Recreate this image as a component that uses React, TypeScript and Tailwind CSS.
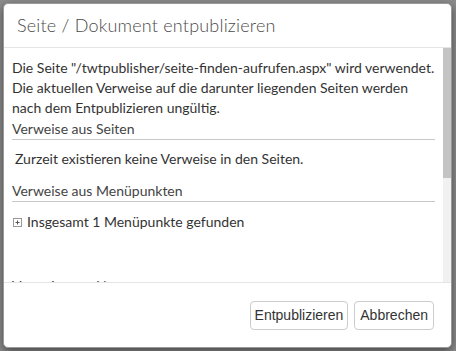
import React from 'react';

const bodyFont = { fontFamily: 'Lato, "Open Sans", sans-serif' };

export default function App() {
  return (
    <div className="h-[351px] w-[456px] overflow-hidden bg-[#8c8c8c] p-[3px] pr-[4px]" style={bodyFont}>
      <div className="flex h-[345px] flex-col overflow-hidden rounded-[5px] border border-[#9a9a9a] bg-white shadow-[0_3px_9px_rgba(0,0,0,0.5)]">
        <header className="flex h-[44px] shrink-0 items-center border-b border-[#e5e5e5] px-[13px]">
          <h4 className="text-[18px] font-light tracking-[0.2px] text-[#4a4a4a]">Seite / Dokument entpublizieren</h4>
        </header>

        <div className="flex h-[235px] shrink-0 border-b border-[#e5e5e5]">
          <div className="min-w-0 flex-1 overflow-hidden pl-[8px] pr-[8px] pt-[10px] text-[14px] leading-5 text-[#333]">
            <p>
              Die Seite "/twtpublisher/seite-finden-aufrufen.aspx" wird verwendet. Die aktuellen Verweise auf die
              darunter liegenden Seiten werden nach dem Entpublizieren ungültig.
            </p>
            <SectionHeading className="mt-px">Verweise aus Seiten</SectionHeading>
            <div className="mt-[9px] pl-[3px]">Zurzeit existieren keine Verweise in den Seiten.</div>
            <SectionHeading className="mt-[12px]">Verweise aus Menüpunkten</SectionHeading>
            <div className="mt-[10px] flex items-center gap-[5px]">
              <ExpandIcon />
              <span>Insgesamt 1 Menüpunkte gefunden</span>
            </div>
            <SectionHeading className="mt-[44px]">Verweise aus News</SectionHeading>
            <div className="mt-[9px] pl-[3px]">Zurzeit existieren keine Verweise in den News.</div>
          </div>
          <div className="flex w-[8px] shrink-0 flex-col bg-[#f1f1f1]">
            <div className="h-[130px] bg-[#c4c4c4]" />
          </div>
        </div>

        <footer
          className="flex flex-1 items-center justify-end gap-[6px] pr-[17px]"
          style={{ fontFamily: '"Liberation Sans", Arial, sans-serif' }}
        >
          <button className="h-[29px] whitespace-nowrap rounded-[4px] border border-[#ccc] bg-white px-[4px] text-[14px] text-[#333]">
            Entpublizieren
          </button>
          <button className="h-[29px] whitespace-nowrap rounded-[4px] border border-[#ccc] bg-white px-[5px] text-[14px] text-[#333]">
            Abbrechen
          </button>
        </footer>
      </div>
    </div>
  );
}

function SectionHeading({ children, className }: { children: React.ReactNode; className?: string }) {
  return <div className={`border-b border-[#c8c8c8] text-[#444] ${className ?? ''}`}>{children}</div>;
}

function ExpandIcon() {
  return (
    <svg width="9" height="9" viewBox="0 0 9 9" className="ml-[1px] shrink-0">
      <rect x="0.5" y="0.5" width="8" height="8" fill="#fff" stroke="#999" />
      <path d="M2.5 4.5h4M4.5 2.5v4" stroke="#555" />
    </svg>
  );
}
